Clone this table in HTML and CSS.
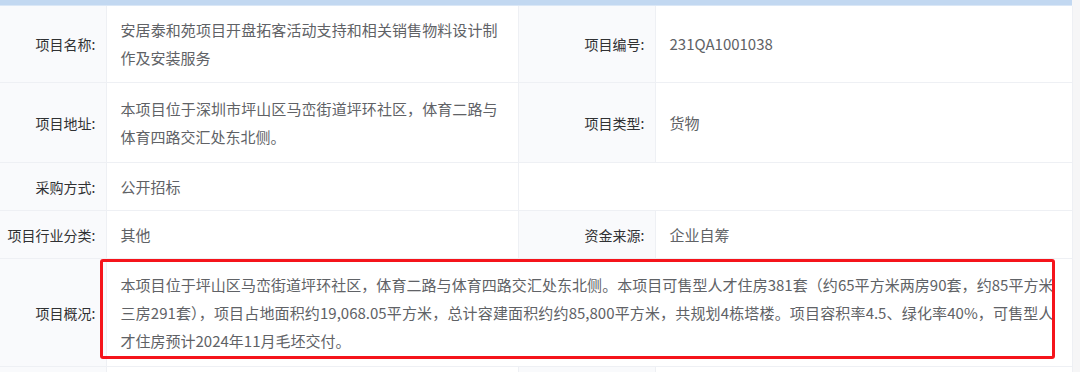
FILE: index.html
```html
<!DOCTYPE html>
<html lang="zh-CN">
<head>
<meta charset="utf-8">
<link rel="stylesheet" href="styles.css">
</head>
<body>
<div class="page">
  <div class="topbar"></div>
  <table class="info">
    <colgroup>
      <col class="c-label1">
      <col class="c-value1">
      <col class="c-label2">
      <col class="c-value2">
    </colgroup>
    <tr>
      <td class="label">项目名称:</td>
      <td class="value">安居泰和苑项目开盘拓客活动支持和相关销售物料设计制作及安装服务</td>
      <td class="label">项目编号:</td>
      <td class="value">231QA1001038</td>
    </tr>
    <tr class="tall">
      <td class="label">项目地址:</td>
      <td class="value">本项目位于深圳市坪山区马峦街道坪环社区，体育二路与体育四路交汇处东北侧。</td>
      <td class="label">项目类型:</td>
      <td class="value">货物</td>
    </tr>
    <tr>
      <td class="label">采购方式:</td>
      <td class="value">公开招标</td>
      <td class="value" colspan="2"></td>
    </tr>
    <tr>
      <td class="label">项目行业分类:</td>
      <td class="value">其他</td>
      <td class="label">资金来源:</td>
      <td class="value">企业自筹</td>
    </tr>
    <tr>
      <td class="label">项目概况:</td>
      <td class="value overview" colspan="3">本项目位于坪山区马峦街道坪环社区，体育二路与体育四路交汇处东北侧。本项目可售型人才住房381套（约65平方米两房90套，约85平方米三房291套），项目占地面积约19,068.05平方米，总计容建面积约约85,800平方米，共规划4栋塔楼。项目容积率4.5、绿化率40%，可售型人才住房预计2024年11月毛坯交付。<span class="mark"></span></td>
    </tr>
    <tr>
      <td class="label"></td>
      <td class="value"></td>
      <td class="label"></td>
      <td class="value"></td>
    </tr>
  </table>
</div>
</body>
</html>
```
FILE: styles.css
```css
html, body {
  margin: 0;
  padding: 0;
  background: #f6f6f7;
}
body {
  font-family: "Noto Sans CJK SC", "Noto Sans", sans-serif;
  font-size: 14px;
  overflow: hidden;
}
.page {
  width: 1072px;
  background: #ffffff;
  min-height: 372px;
}
.topbar {
  height: 5px;
  background: #c2d8f1;
  border-bottom: 1px solid #dae7f6;
}
.info {
  width: 1072px;
  table-layout: fixed;
  border-collapse: collapse;
}
.c-label1 { width: 106px; }
.c-value1 { width: 412px; }
.c-label2 { width: 137px; }
.c-value2 { width: 417px; }
.info td {
  border: 1px solid #eef0f4;
  padding: 10px 20px 9px 14px;
  line-height: 28px;
  vertical-align: middle;
  word-break: break-all;
}
.info tr:first-child td {
  border-top: none;
  padding-bottom: 10px;
}
.info tr.tall td {
  padding-top: 12px;
  padding-bottom: 11px;
}
.info td:first-child { border-left: none; }
.label {
  background: #f9fafc;
  color: #303133;
  font-size: 14px;
  text-align: right;
  padding-right: 10px !important;
  padding-left: 0 !important;
  white-space: nowrap;
}
.value {
  background: #ffffff;
  color: #606266;
  font-size: 15px;
  text-align: justify;
}
.overview {
  position: relative;
  padding-right: 18px !important;
  padding-top: 12px !important;
  padding-bottom: 11px !important;
}
.mark {
  position: absolute;
  left: -7px;
  top: 0;
  right: 17px;
  bottom: 7px;
  border: 3px solid #f5141b;
  border-radius: 3px;
  pointer-events: none;
}
```
